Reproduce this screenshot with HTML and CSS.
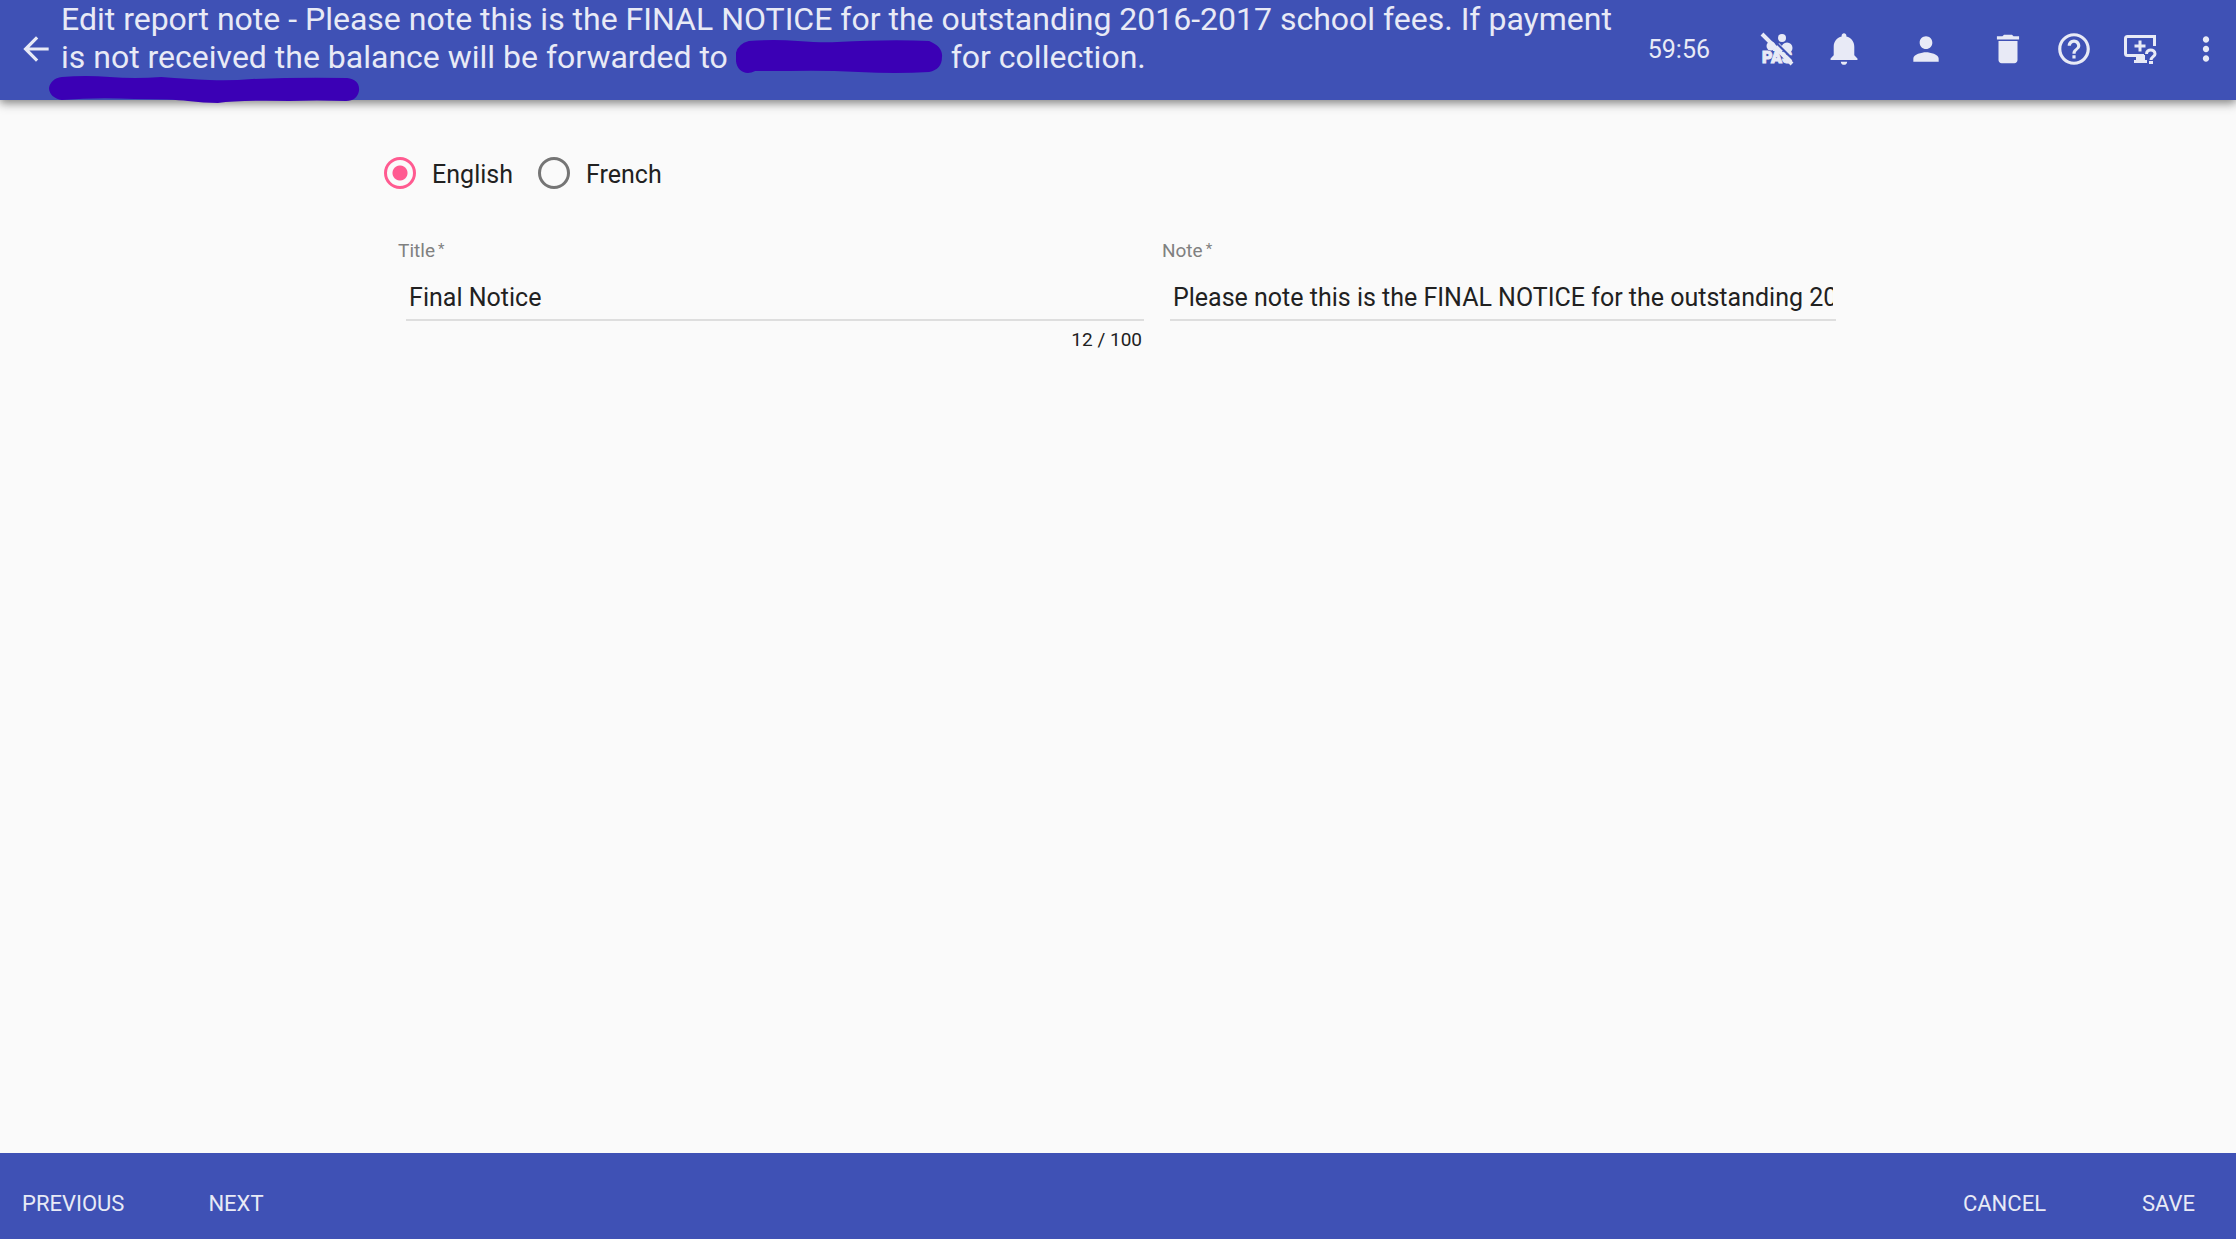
FILE: index.html
```html
<!DOCTYPE html>
<html lang="en">
<head>
<meta charset="utf-8">
<title>Edit report note</title>
<link rel="stylesheet" href="styles.css">
</head>
<body>
<header class="toolbar">
  <button class="icon-button back" type="button" aria-label="Back">
    <svg class="icon" viewBox="0 0 24 24"><path d="M20 11H7.83l5.590-5.590L12 4l-8 8 8 8 1.410-1.410L7.830 13H20v-2z"/></svg>
  </button>
  <h1 class="heading">Edit report note - Please note this is the FINAL NOTICE for the outstanding 2016-2017 school fees. If payment is not received the balance will be forwarded to <svg class="redaction" viewBox="0 0 194 35" preserveAspectRatio="none"><path d="M12 1Q35-1 58 1T95 2Q145-1 181 1C190 5 194 11 193 18C193 26 189 31 181 33Q150 35 115 33T50 32H18C9 37 1 32 0 22V13Q2 4 12 1Z"/></svg> for collection.<svg class="redaction redaction-line" viewBox="0 0 291 28" preserveAspectRatio="none"><path d="M12 1Q34-1 57 1T105 1Q130 3 150 4T190 3Q235 1 279 2C287 3 291 8 290 15C289 21 285 25 278 25Q250 24 225 25Q180 24 158 27Q145 27 130 25T80 23Q45 21 12 24C5 23 0 18 0 12C1 6 5 2 12 1Z"/></svg></h1>
  <span class="timer">59:56</span>
  <nav class="actions" aria-label="Tools">
    <button class="icon-button" type="button" aria-label="PAS off">
      <svg class="icon" viewBox="0 0 38 38">
        <circle cx="23" cy="8" r="4"/><circle cx="12" cy="16" r="4.500"/><circle cx="28" cy="18" r="5.500"/><path d="M14 20l6-7 9 9H14z"/>
        <path class="text-gap" d="M3 21H29V34H3z"/>
        <text class="pas" x="3" y="33">PAS</text>
        <path class="slash-gap" d="M6.500 2l29 29"/><path class="slash" d="M3 4l30 30"/>
      </svg>
    </button>
    <button class="icon-button" type="button" aria-label="Notifications">
      <svg class="icon" viewBox="0 0 24 24"><path d="M12 22c1.100 0 2-.9 2-2h-4c0 1.100.9 2 2 2zm6.500-6v-5.500c0-3.070-2.130-5.640-5-6.320V3.500c0-.83-.67-1.500-1.500-1.500s-1.500.67-1.500 1.500v.68c-2.870.68-5 3.250-5 6.320V16l-2 2v1h17v-1l-2-2z"/></svg>
    </button>
    <button class="icon-button account" type="button" aria-label="Account">
      <svg class="icon" viewBox="0 0 24 24"><path d="M12 12c2.210 0 4-1.790 4-4s-1.790-4-4-4-4 1.790-4 4 1.790 4 4 4zm0 2c-2.670 0-8 1.340-8 4v2h16v-2c0-2.660-5.330-4-8-4z"/></svg>
    </button>
    <button class="icon-button" type="button" aria-label="Delete">
      <svg class="icon" viewBox="0 0 24 24"><path d="M6 19c0 1.100.9 2 2 2h8c1.100 0 2-.9 2-2V7H6v12zM19 4h-3.500l-1-1h-5l-1 1H5v2h14V4z"/></svg>
    </button>
    <button class="icon-button" type="button" aria-label="Help">
      <svg class="icon" viewBox="0 0 24 24"><path d="M11 18h2v-2h-2v2zm1-16C6.480 2 2 6.480 2 12s4.480 10 10 10 10-4.480 10-10S17.520 2 12 2zm0 18c-4.410 0-8-3.590-8-8s3.590-8 8-8 8 3.590 8 8-3.590 8-8 8zm0-14c-2.210 0-4 1.790-4 4h2c0-1.100.9-2 2-2s2 .9 2 2c0 2-3 1.750-3 5h2c0-2.250 3-2.500 3-5 0-2.210-1.790-4-4-4z"/></svg>
    </button>
    <button class="icon-button" type="button" aria-label="Remote support">
      <svg class="icon" viewBox="0 0 38 38">
        <path class="line" d="M33.500 16V6.500H6.500a2 2 0 0 0-2 2v15a2 2 0 0 0 2 2H23"/>
        <path d="M15 25h9v5h2v3H13v-3h2zM17.500 10.500h3v4h4v3h-4v4h-3v-4h-4v-3h4zM28 31h4v3h-4z"/>
        <path class="line" d="M25.500 24c0-5.500 8.500-5.500 8.500 0 0 2.500-4 3-4 6"/>
      </svg>
    </button>
    <button class="icon-button" type="button" aria-label="More">
      <svg class="icon" viewBox="0 0 24 24"><path d="M12 8c1.100 0 2-.9 2-2s-.9-2-2-2-2 .9-2 2 .9 2 2 2zm0 2c-1.100 0-2 .9-2 2s.9 2 2 2 2-.9 2-2-.9-2-2-2zm0 6c-1.100 0-2 .9-2 2s.9 2 2 2 2-.9 2-2-.9-2-2-2z"/></svg>
    </button>
  </nav>
</header>
<main class="content">
  <form class="note-form" id="note-form">
    <div class="languages" role="radiogroup" aria-label="Language">
      <label class="choice"><input class="radio" type="radio" name="language" checked><span class="choice-text">English</span></label>
      <label class="choice"><input class="radio" type="radio" name="language"><span class="choice-text">French</span></label>
    </div>
    <div class="fields">
      <div class="field">
        <label class="field-label" for="title">Title<span class="required">*</span></label>
        <input class="field-input" id="title" type="text" maxlength="100" value="Final Notice">
        <div class="counter">12 / 100</div>
      </div>
      <div class="field">
        <label class="field-label" for="note">Note<span class="required">*</span></label>
        <input class="field-input" id="note" type="text" value="Please note this is the FINAL NOTICE for the outstanding 2016-2017 school fees. If payment is not received the balance will be forwarded">
      </div>
    </div>
  </form>
</main>
<footer class="footer">
  <div class="footer-group">
    <button class="text-button" type="button">PREVIOUS</button>
    <button class="text-button" type="button">NEXT</button>
  </div>
  <div class="footer-group footer-end">
    <button class="text-button" type="button">CANCEL</button>
    <button class="text-button" type="submit" form="note-form">SAVE</button>
  </div>
</footer>
</body>
</html>
```
FILE: styles.css
```css
* {
  box-sizing: border-box;
}

body {
  display: flex;
  flex-direction: column;
  min-height: 100vh;
  margin: 0;
  background: #fafafa;
  color: #212121;
  font-family: Roboto, sans-serif;
  font-size: 25px;
}

button {
  border: 0;
  padding: 0;
  background: none;
  color: inherit;
  font: inherit;
  cursor: pointer;
}

/* Top toolbar */
.toolbar {
  display: flex;
  align-items: center;
  height: 100px;
  padding: 0 0 2px 13px;
  background: #3f51b5;
  color: #e8eaf6;
  box-shadow: 0 2px 8px rgba(0, 0, 0, 0.3), 0 4px 10px rgba(0, 0, 0, 0.25);
}

.icon-button {
  display: flex;
  flex: none;
  align-items: center;
  justify-content: center;
  width: 60px;
  height: 60px;
}

.back {
  width: 46px;
}

.icon {
  width: 38px;
  height: 38px;
  fill: #e8eaf6;
}

.line {
  fill: none;
  stroke: #e8eaf6;
  stroke-width: 3;
}

.slash {
  stroke: #e8eaf6;
  stroke-width: 4;
}

.slash-gap {
  stroke: #3f51b5;
  stroke-width: 2;
}

.text-gap {
  fill: #3f51b5;
}

.pas {
  font-size: 16px;
  font-weight: 900;
  stroke: #e8eaf6;
  stroke-width: 1;
}

.heading {
  flex: 1;
  align-self: flex-start;
  margin: 0;
  padding: 0 16px 0 2px;
  font-size: 32px;
  font-weight: 400;
  line-height: 38px;
}

.redaction {
  width: 207px;
  height: 34px;
  margin: -6px 0 0;
  fill: #3b00b5;
  vertical-align: middle;
}

.redaction-line {
  display: block;
  width: 311px;
  height: 28px;
  margin: 0 0 0 -12px;
}

.timer {
  flex: none;
  margin-right: 38px;
}

.actions {
  display: flex;
  flex: none;
  gap: 6px;
}

.account {
  margin: 0 16px;
}

/* Form */
.content {
  flex: 1;
  padding: 57px 17%;
}

.languages {
  display: flex;
  gap: 25px;
  padding-left: 4px;
}

.choice {
  display: flex;
  align-items: center;
  gap: 16px;
}

.choice-text {
  padding-top: 2px;
}

.radio {
  appearance: none;
  width: 32px;
  height: 32px;
  margin: 0;
  border: 3px solid #757575;
  border-radius: 50%;
}

.radio:checked {
  border-color: #ff5a90;
  background: radial-gradient(circle, #ff5a90 7px, transparent 8px);
}

.fields {
  display: grid;
  grid-template-columns: 41fr 37fr;
  gap: 26px;
  margin-top: 49px;
  padding: 0 20px 0 26px;
}

.field {
  min-width: 0;
}

.field-label {
  display: block;
  margin-left: -8px;
  color: #808080;
  font-size: 19px;
  line-height: 26px;
}

.required {
  margin-left: 3px;
  font-size: 15px;
  vertical-align: top;
  line-height: 22px;
}

.field-input {
  display: block;
  width: 100%;
  height: 46px;
  margin-top: 11px;
  padding: 2px 3px;
  border: 0;
  border-bottom: 2px solid #dedede;
  outline: 0;
  background: none;
  color: inherit;
  font: inherit;
}

.counter {
  padding: 6px 2px;
  font-size: 19px;
  line-height: 26px;
  text-align: right;
}

/* Bottom bar */
.footer {
  display: flex;
  justify-content: space-between;
  padding: 28px 41px 14px 22px;
  background: #3f51b5;
  color: #e8eaf6;
  font-size: 22px;
}

.footer-group {
  display: flex;
  gap: 84px;
}

.footer-end {
  gap: 96px;
}

.text-button {
  height: 44px;
}
```
